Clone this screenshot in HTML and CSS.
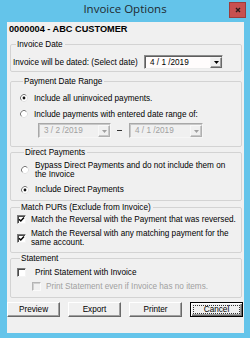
FILE: index.html
```html
<!DOCTYPE html>
<html>
<head>
<meta charset="utf-8">
<title>Invoice Options</title>
<link rel="stylesheet" href="styles.css">
</head>
<body>
<div class="window">
  <div class="titlebar">
    <span class="title">Invoice Options</span>
    <span class="close"><svg width="6" height="6" viewBox="0 0 6 6"><path d="M1 1L5 5M5 1L1 5" stroke="#2a1a1a" stroke-width="1.4"/></svg></span>
  </div>
  <div class="client">
    <div class="customer">0000004 - ABC CUSTOMER</div>

    <fieldset class="group g-invoice">
      <legend>Invoice Date</legend>
      <div class="date-row">
        <span>Invoice will be dated: (Select date)</span>
        <div class="combo combo-main">
          <span class="combo-value">4 / 1 /2019</span>
          <span class="combo-btn"><svg width="5" height="3" viewBox="0 0 5 3"><path d="M0 0H5L2.5 3Z" fill="#000"/></svg></span>
        </div>
      </div>
    </fieldset>

    <fieldset class="group g-range">
      <legend>Payment Date Range</legend>
      <div class="opt">
        <svg class="radio" width="8" height="8" viewBox="0 0 8 8"><circle cx="4" cy="4" r="3.5" fill="#fff"/><path d="M1.5 6.5A3.5 3.5 0 0 1 6.5 1.5" stroke="#7a7a7a" fill="none"/><path d="M6.5 1.5A3.5 3.5 0 0 1 1.5 6.5" stroke="#e2e2e2" fill="none"/><circle cx="4" cy="4" r="1.4" fill="#111"/></svg>
        <span>Include all uninvoiced payments.</span>
      </div>
      <div class="opt">
        <svg class="radio" width="8" height="8" viewBox="0 0 8 8"><circle cx="4" cy="4" r="3.5" fill="#fff"/><path d="M1.5 6.5A3.5 3.5 0 0 1 6.5 1.5" stroke="#7a7a7a" fill="none"/><path d="M6.5 1.5A3.5 3.5 0 0 1 1.5 6.5" stroke="#e2e2e2" fill="none"/></svg>
        <span>Include payments with entered date range of:</span>
      </div>
      <div class="range-row">
        <div class="combo combo-off combo-from">
          <span class="combo-value">3 / 2 /2019</span>
          <span class="combo-btn"><svg width="5" height="3" viewBox="0 0 5 3"><path d="M0 0H5L2.5 3Z" fill="#a0a0a0"/></svg></span>
        </div>
        <span class="dash"></span>
        <div class="combo combo-off combo-to">
          <span class="combo-value">4 / 1 /2019</span>
          <span class="combo-btn"><svg width="5" height="3" viewBox="0 0 5 3"><path d="M0 0H5L2.5 3Z" fill="#a0a0a0"/></svg></span>
        </div>
      </div>
    </fieldset>

    <fieldset class="group g-direct">
      <legend>Direct Payments</legend>
      <div class="opt opt-multi">
        <svg class="radio" width="8" height="8" viewBox="0 0 8 8"><circle cx="4" cy="4" r="3.5" fill="#fff"/><path d="M1.5 6.5A3.5 3.5 0 0 1 6.5 1.5" stroke="#7a7a7a" fill="none"/><path d="M6.5 1.5A3.5 3.5 0 0 1 1.5 6.5" stroke="#e2e2e2" fill="none"/></svg>
        <span class="wrap-direct">Bypass Direct Payments and do not include them on the Invoice</span>
      </div>
      <div class="opt opt-second">
        <svg class="radio" width="8" height="8" viewBox="0 0 8 8"><circle cx="4" cy="4" r="3.5" fill="#fff"/><path d="M1.5 6.5A3.5 3.5 0 0 1 6.5 1.5" stroke="#7a7a7a" fill="none"/><path d="M6.5 1.5A3.5 3.5 0 0 1 1.5 6.5" stroke="#e2e2e2" fill="none"/><circle cx="4" cy="4" r="1.4" fill="#111"/></svg>
        <span>Include Direct Payments</span>
      </div>
    </fieldset>

    <fieldset class="group g-match">
      <legend>Match PURs (Exclude from Invoice)</legend>
      <div class="chk-row">
        <span class="check"><svg width="7" height="7" viewBox="0 0 7 7"><path d="M1 3.2L2.8 5L6 1.6" stroke="#000" stroke-width="1.5" fill="none"/></svg></span>
        <span>Match the Reversal with the Payment that was reversed.</span>
      </div>
      <div class="chk-row chk-second">
        <span class="check"><svg width="7" height="7" viewBox="0 0 7 7"><path d="M1 3.2L2.8 5L6 1.6" stroke="#000" stroke-width="1.5" fill="none"/></svg></span>
        <span class="wrap-match">Match the Reversal with any matching payment for the same account.</span>
      </div>
    </fieldset>

    <fieldset class="group g-statement">
      <legend>Statement</legend>
      <div class="chk-row chk-wide">
        <span class="check"></span>
        <span>Print Statement with Invoice</span>
      </div>
      <div class="chk-row chk-sub">
        <span class="check check-off"></span>
        <span class="disabled">Print Statement even if Invoice has no items.</span>
      </div>
    </fieldset>

    <div class="buttons">
      <button class="btn">Preview</button>
      <button class="btn">Export</button>
      <button class="btn">Printer</button>
      <button class="btn btn-default"><span class="focus">Cancel</span></button>
    </div>
  </div>
</div>
</body>
</html>
```

FILE: styles.css
```css
* { box-sizing: border-box; }

html, body {
  margin: 0;
  padding: 0;
}

body {
  background: #64c4ea;
  font-family: "Liberation Sans", Arial, sans-serif;
  font-size: 8.2px;
  color: #000;
}

.window {
  width: 250px;
  height: 338px;
  background: #64c4ea;
  display: flex;
  flex-direction: column;
}

.titlebar {
  height: 22px;
  flex: 0 0 22px;
  display: grid;
  grid-template-columns: 1fr auto 1fr;
  align-items: start;
}

.title {
  grid-column: 2;
  font-family: "Open Sans", "Noto Sans", sans-serif;
  font-size: 11.5px;
  line-height: 14px;
  margin-top: 2px;
  color: #1f2a30;
}

.close {
  grid-column: 3;
  justify-self: end;
  width: 17px;
  height: 16px;
  margin-top: 2px;
  margin-right: 4px;
  background: #c75050;
  border: 1px solid #9c3c3c;
  display: flex;
  align-items: center;
  justify-content: center;
}

.client {
  flex: 1;
  margin: 0 6px 5px 7px;
  background: #f0f0f0;
  padding-top: 2px;
  display: flex;
  flex-direction: column;
}

.customer {
  font-weight: bold;
  font-size: 9.2px;
  line-height: 11px;
  padding-left: 2px;
}

.group {
  border: 1px solid #d3d3d3;
  border-radius: 2px;
  margin: 0 2px 0 3px;
  padding: 0;
  min-width: 0;
}

.group legend {
  margin-left: 3px;
  padding: 0 2px 0 1px;
  line-height: 9px;
  font-size: 8.2px;
}

/* Invoice Date */
.g-invoice {
  margin-top: 5px;
  padding: 6px 18px 2px 2px;
}

.date-row {
  display: flex;
  align-items: center;
  height: 14px;
}

.date-row .combo {
  margin-left: auto;
}

/* combos */
.combo {
  display: flex;
  align-items: stretch;
  background: #fff;
  border: 1px solid;
  border-color: #8c8c8c #ececec #ececec #8c8c8c;
  box-shadow: inset 1px 1px 0 #5e5e5e;
}

.combo-main {
  width: 79px;
  height: 14px;
  background: #fffcfc;
}

.combo-value {
  flex: 1;
  padding-left: 5px;
  padding-top: 1px;
  line-height: 11px;
  white-space: nowrap;
}

.combo-btn {
  width: 12px;
  margin: 1px 0 0 0;
  background: #f0f0f0;
  border: 1px solid;
  border-color: #f4f4f4 #696969 #696969 #f4f4f4;
  box-shadow: inset -1px -1px 0 #a0a0a0;
  display: flex;
  align-items: center;
  justify-content: center;
}

.combo-off {
  background: #f0f0f0;
  height: 15px;
  border-color: #a8a8a8 #f6f6f6 #f6f6f6 #a8a8a8;
  box-shadow: inset 1px 1px 0 #c8c8c8;
  color: #a0a0a0;
}

.combo-off .combo-btn {
  border-color: #f8f8f8 #b0b0b0 #b0b0b0 #f8f8f8;
  box-shadow: inset -1px -1px 0 #c8c8c8;
}

.combo-from { width: 73px; }
.combo-to { width: 74px; }

/* Payment Date Range */
.g-range {
  margin-top: 5px;
  padding: 4px 0 8px 9px;
}

.opt {
  display: flex;
  align-items: center;
  gap: 6px;
  height: 16px;
  line-height: 9px;
}

.radio {
  flex: 0 0 8px;
  display: block;
}

.range-row {
  display: flex;
  align-items: center;
  margin-top: 1px;
  padding-left: 18px;
}

.dash {
  width: 18px;
  display: flex;
  justify-content: center;
}

.dash::before {
  content: "";
  width: 5px;
  height: 1px;
  margin-left: -1px;
  background: #333;
}

/* Direct Payments */
.g-direct {
  margin-top: 1px;
  padding: 4px 0 6px 10px;
}

.opt-multi {
  height: 18px;
}

.wrap-direct {
  width: 196px;
}

.opt-second {
  height: 9px;
  margin-top: 6px;
}

/* Match PURs */
.g-match {
  margin-top: 2px;
  padding: 3px 0 5px 6px;
}

.chk-row {
  display: flex;
  align-items: center;
  gap: 5px;
  line-height: 9px;
  min-height: 9px;
}

.chk-second {
  margin-top: 5px;
}

.wrap-match {
  width: 200px;
}

.check {
  flex: 0 0 9px;
  width: 9px;
  height: 9px;
  background: #fff;
  border: 1px solid;
  border-color: #7a7a7a #f4f4f4 #f4f4f4 #7a7a7a;
  box-shadow: inset 1px 1px 0 #4a4a4a;
  display: flex;
  align-items: center;
  justify-content: center;
}

.check-off {
  background: #f0f0f0;
  border-color: #b4b4b4 #fafafa #fafafa #b4b4b4;
  box-shadow: inset 1px 1px 0 #d0d0d0;
}

/* Statement */
.g-statement {
  margin-top: 1px;
  padding: 5px 0 6px 6px;
}

.chk-wide {
  gap: 9px;
}

.chk-sub {
  margin-top: 5px;
  padding-left: 15px;
}

.disabled {
  color: #a0a0a0;
}

/* Buttons */
.buttons {
  display: flex;
  gap: 8px;
  margin-top: 4px;
}

.btn {
  appearance: none;
  width: 53px;
  height: 15px;
  padding: 0;
  margin: 0;
  font-family: "Liberation Sans", Arial, sans-serif;
  font-size: 8.2px;
  line-height: 11px;
  color: #000;
  background: #f0f0f0;
  border: 1px solid;
  border-color: #ffffff #696969 #696969 #ffffff;
  box-shadow: inset -1px -1px 0 #a0a0a0;
  display: flex;
  align-items: center;
  justify-content: center;
}

.btn-default {
  border: 1px solid #000;
  box-shadow: inset 1px 1px 0 #fff, inset -1px -1px 0 #696969, inset -2px -2px 0 #a0a0a0;
  padding: 2px;
}

.btn-default .focus {
  flex: 1;
  align-self: stretch;
  border: 1px dotted #333;
  display: flex;
  align-items: center;
  justify-content: center;
}
```
